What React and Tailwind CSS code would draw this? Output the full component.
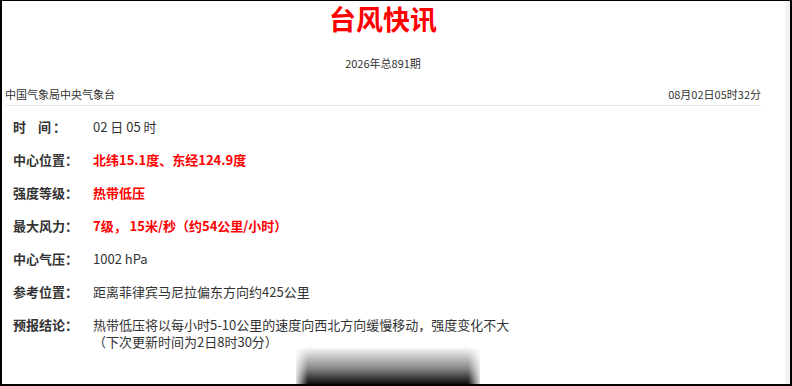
import React from "react";

const rows = [
  { label: "time", value: "02 日 05 时", red: false },
  { label: "中心位置：", value: "北纬15.1度、东经124.9度", red: true },
  { label: "强度等级：", value: "热带低压", red: true },
  { label: "最大风力：", value: "7级， 15米/秒（约54公里/小时）", red: true },
  { label: "中心气压：", value: "1002 hPa", red: false },
  { label: "参考位置：", value: "距离菲律宾马尼拉偏东方向约425公里", red: false },
];

export default function App() {
  return (
    <div
      className="relative w-[792px] h-[386px] overflow-hidden bg-white border-2 border-black border-t flex text-[#333]"
      style={{ fontFamily: '"Noto Sans CJK SC", "Noto Sans", sans-serif' }}
    >
      <div className="flex-1 pl-[3px]">
        <div className="w-[756px]">
          <div className="text-center text-[27px] leading-[36px] font-bold text-[#ff0000]">台风快讯</div>
          <div className="text-center text-[11px] leading-[16px] mt-[18px]">2026年总891期</div>
          <div className="flex justify-between text-[11px] leading-[16px] mt-[15px] pb-[3px] border-b border-[#e6e6e6]">
            <span>中国气象局中央气象台</span>
            <span>08月02日05时32分</span>
          </div>
          <div className="mt-[4px] pl-[8px] text-[13px] leading-[17px]">
            {rows.map((r, i) => (
              <div key={i} className="flex py-[8px]">
                <div className="w-[80px] shrink-0 font-bold">
                  {r.label === "time" ? (
                    <span className="flex">
                      <span>时</span>
                      <span className="inline-block w-[12px]" />
                      <span>间</span>
                      <span className="inline-block w-[2px]" />
                      <span>：</span>
                    </span>
                  ) : (
                    r.label
                  )}
                </div>
                <div className={r.red ? "font-bold text-[#ff0000]" : ""}>{r.value}</div>
              </div>
            ))}
            <div className="flex py-[8px]">
              <div className="w-[80px] shrink-0 font-bold">预报结论：</div>
              <div>
                <div>热带低压将以每小时5-10公里的速度向西北方向缓慢移动，强度变化不大</div>
                <div>（下次更新时间为2日8时30分）</div>
              </div>
            </div>
          </div>
        </div>
      </div>
      <div className="w-[5px] bg-[#f2f2f2] shrink-0" />
      <div className="absolute left-[294px] bottom-0 w-[184px] h-[36px] bg-[linear-gradient(to_bottom,#f6f6f6,#8c8c8c_55%,#0d0d0d)]">
        <div className="absolute left-0 top-0 h-full w-[12px] bg-[linear-gradient(to_right,rgba(255,255,255,0.85),rgba(255,255,255,0))]" />
        <div className="absolute right-0 top-0 h-full w-[12px] bg-[linear-gradient(to_left,rgba(255,255,255,0.85),rgba(255,255,255,0))]" />
      </div>
    </div>
  );
}
